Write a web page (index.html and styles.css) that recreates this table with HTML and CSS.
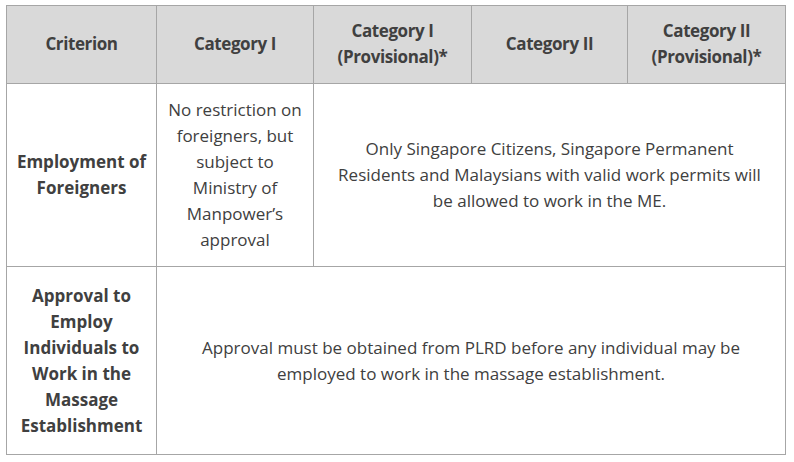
FILE: index.html
```html
<!DOCTYPE html>
<html>
<head>
<meta charset="utf-8">
<link rel="stylesheet" href="styles.css">
</head>
<body>
<table class="grid">
  <colgroup>
    <col class="c1"><col class="c2"><col class="c3"><col class="c4"><col class="c5">
  </colgroup>
  <thead>
    <tr class="head">
      <th>Criterion</th>
      <th>Category I</th>
      <th>Category I<br>(Provisional)*</th>
      <th>Category II</th>
      <th>Category II<br>(Provisional)*</th>
    </tr>
  </thead>
  <tbody>
    <tr class="row-a">
      <th class="crit">Employment of Foreigners</th>
      <td class="narrow">No restriction on foreigners, but subject to Ministry of Manpower’s approval</td>
      <td colspan="3" class="wide">Only Singapore Citizens, Singapore Permanent Residents and Malaysians with valid work permits will be allowed to work in the ME.</td>
    </tr>
    <tr class="row-b">
      <th class="crit">Approval to Employ Individuals to Work in the Massage Establishment</th>
      <td colspan="4" class="wide2">Approval must be obtained from PLRD before any individual may be employed to work in the massage establishment.</td>
    </tr>
  </tbody>
</table>
</body>
</html>
```
FILE: styles.css
```css
html, body { background: #ffffff; }
body {
  margin: 5px 0 0 6px;
  font-family: "Open Sans", "Noto Sans", sans-serif;
  color: #404040;
}
.grid {
  border-collapse: collapse;
  table-layout: fixed;
  width: 780px;
  font-size: 17px;
  line-height: 26px;
}
.c1 { width: 150px; }
.c2 { width: 157px; }
.c3 { width: 158px; }
.c4 { width: 156px; }
.c5 { width: 158px; }
.grid th, .grid td {
  border: 1px solid #a6a6a6;
  text-align: center;
  vertical-align: middle;
  padding: 0 6px;
}
.grid th { font-weight: 700; }
.grid .head th {
  background: #d9d9d9;
  height: 75px;
  padding-bottom: 2px;
  letter-spacing: -0.4px;
}
.grid .row-a > * { height: 182px; }
.grid .row-b > * { height: 187px; }
.grid .narrow { padding: 0 9px; }
.grid .wide { padding: 0 17px; }
.grid .wide2 { padding: 0 30px; }
```
